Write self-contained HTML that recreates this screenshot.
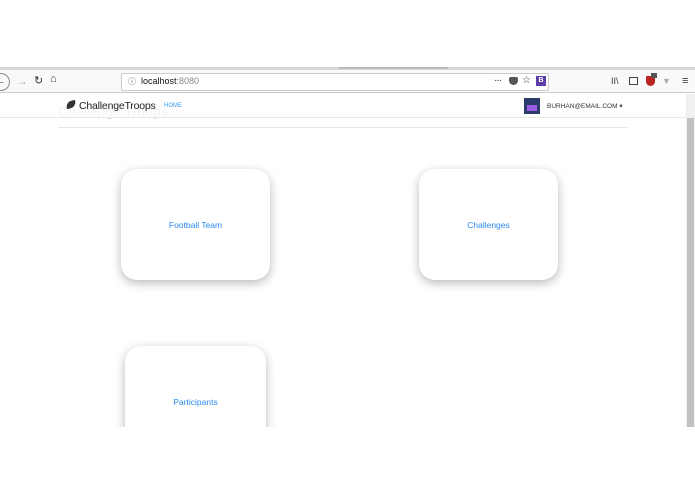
<!DOCTYPE html>
<html><head><meta charset="utf-8"><style>
*{margin:0;padding:0;box-sizing:border-box}
body{width:695px;height:494px;background:#fff;font-family:"Liberation Sans",sans-serif;position:relative;overflow:hidden}
.abs{position:absolute;white-space:nowrap}
.card{position:absolute;background:#fff;border-radius:16px;box-shadow:0 3px 10px rgba(0,0,0,.28);color:#2a8af0;font-size:8.5px;display:flex;align-items:center;justify-content:center}
</style></head><body>
<div class="abs" style="left:0;top:67px;width:695px;height:3px;background:#d7d7db"></div>
<div class="abs" style="left:338px;top:67px;width:110px;height:2px;background:#bbb"></div>
<div class="abs" style="left:0;top:70px;width:695px;height:23px;background:#f9f9fa;border-bottom:1px solid #ccc"></div>
<div class="abs" style="left:-8px;top:73px;width:18px;height:18px;border:1px solid #888;border-radius:50%;font-size:11px;line-height:15px;text-align:right;padding-right:3px;color:#333">←</div>
<div class="abs" style="left:16px;top:74px;font-size:12px;color:#aaa">→</div>
<div class="abs" style="left:34px;top:74px;font-size:11px;color:#333">↻</div>
<div class="abs" style="left:50px;top:73px;font-size:11px;color:#333">⌂</div>
<div class="abs" style="left:121px;top:73px;width:428px;height:18px;background:#fff;border:1px solid #ccc;border-radius:2px"></div>
<div class="abs" style="left:128px;top:76px;font-size:8px;color:#555">ⓘ</div>
<div class="abs" style="left:141px;top:76px;font-size:9px;color:#111">localhost<span style="color:#888">:8080</span></div>
<div class="abs" style="left:494px;top:75px;font-size:10px;color:#333;letter-spacing:-1px">···</div>
<div class="abs" style="left:509px;top:77px;width:9px;height:8px;background:#555;border-radius:2px 2px 5px 5px"></div>
<div class="abs" style="left:522px;top:75px;font-size:10px;color:#333">☆</div>
<div class="abs" style="left:536px;top:76px;width:10px;height:10px;background:#5b3ea8;color:#fff;font-size:7px;font-weight:bold;text-align:center;line-height:10px">B</div>
<div class="abs" style="left:611px;top:76px;font-size:9px;color:#333">II\</div>
<div class="abs" style="left:629px;top:77px;width:9px;height:8px;border:1px solid #444"></div>
<div class="abs" style="left:646px;top:76px;width:9px;height:10px;background:#b22;border-radius:1px 1px 5px 5px"></div>
<div class="abs" style="left:651px;top:73px;width:6px;height:5px;background:#555"></div>
<div class="abs" style="left:662px;top:76px;font-size:9px;color:#aaa">▼</div>
<div class="abs" style="left:682px;top:75px;font-size:11px;color:#333">≡</div>
<div class="abs" style="left:686px;top:94px;width:9px;height:333px;background:#f0f0f0"></div>
<div class="abs" style="left:687px;top:118px;width:7px;height:309px;background:#c1c1c1"></div>
<div class="abs" style="left:58px;top:103px;font-size:14px;color:#ccc">Challenge Troops</div>
<div class="abs" style="left:0;top:94px;width:686px;height:24px;background:rgba(255,255,255,.75);border-bottom:1px solid #e6e6e6"></div>
<div class="abs" style="left:58px;top:127px;width:570px;height:1px;background:#e6e6e6"></div>
<div class="abs" style="left:66px;top:101px;width:10px;height:7px;background:#333;border-radius:8px 1px 8px 1px;transform:rotate(-15deg)"></div>
<div class="abs" style="left:79px;top:100px;font-size:10.5px;color:#222;letter-spacing:-0.2px">ChallengeTroops</div>
<div class="abs" style="left:164px;top:103px;font-size:6px;color:#3b9cf0">HOME</div>
<div class="abs" style="left:524px;top:98px;width:16px;height:16px;background:#2c3a6a"><div style="margin:7px 3px 0;width:10px;height:6px;background:#9a5ce0"></div></div>
<div class="abs" style="left:547px;top:102px;font-size:6.5px;color:#333">BURHAN@EMAIL.COM ▾</div>
<div class="card" style="left:121px;top:169px;width:149px;height:111px">Football Team</div>
<div class="card" style="left:419px;top:169px;width:139px;height:111px">Challenges</div>
<div class="card" style="left:125px;top:346px;width:141px;height:111px">Participants</div>
<div class="abs" style="left:0;top:427px;width:695px;height:67px;background:#fff"></div>
</body></html>
